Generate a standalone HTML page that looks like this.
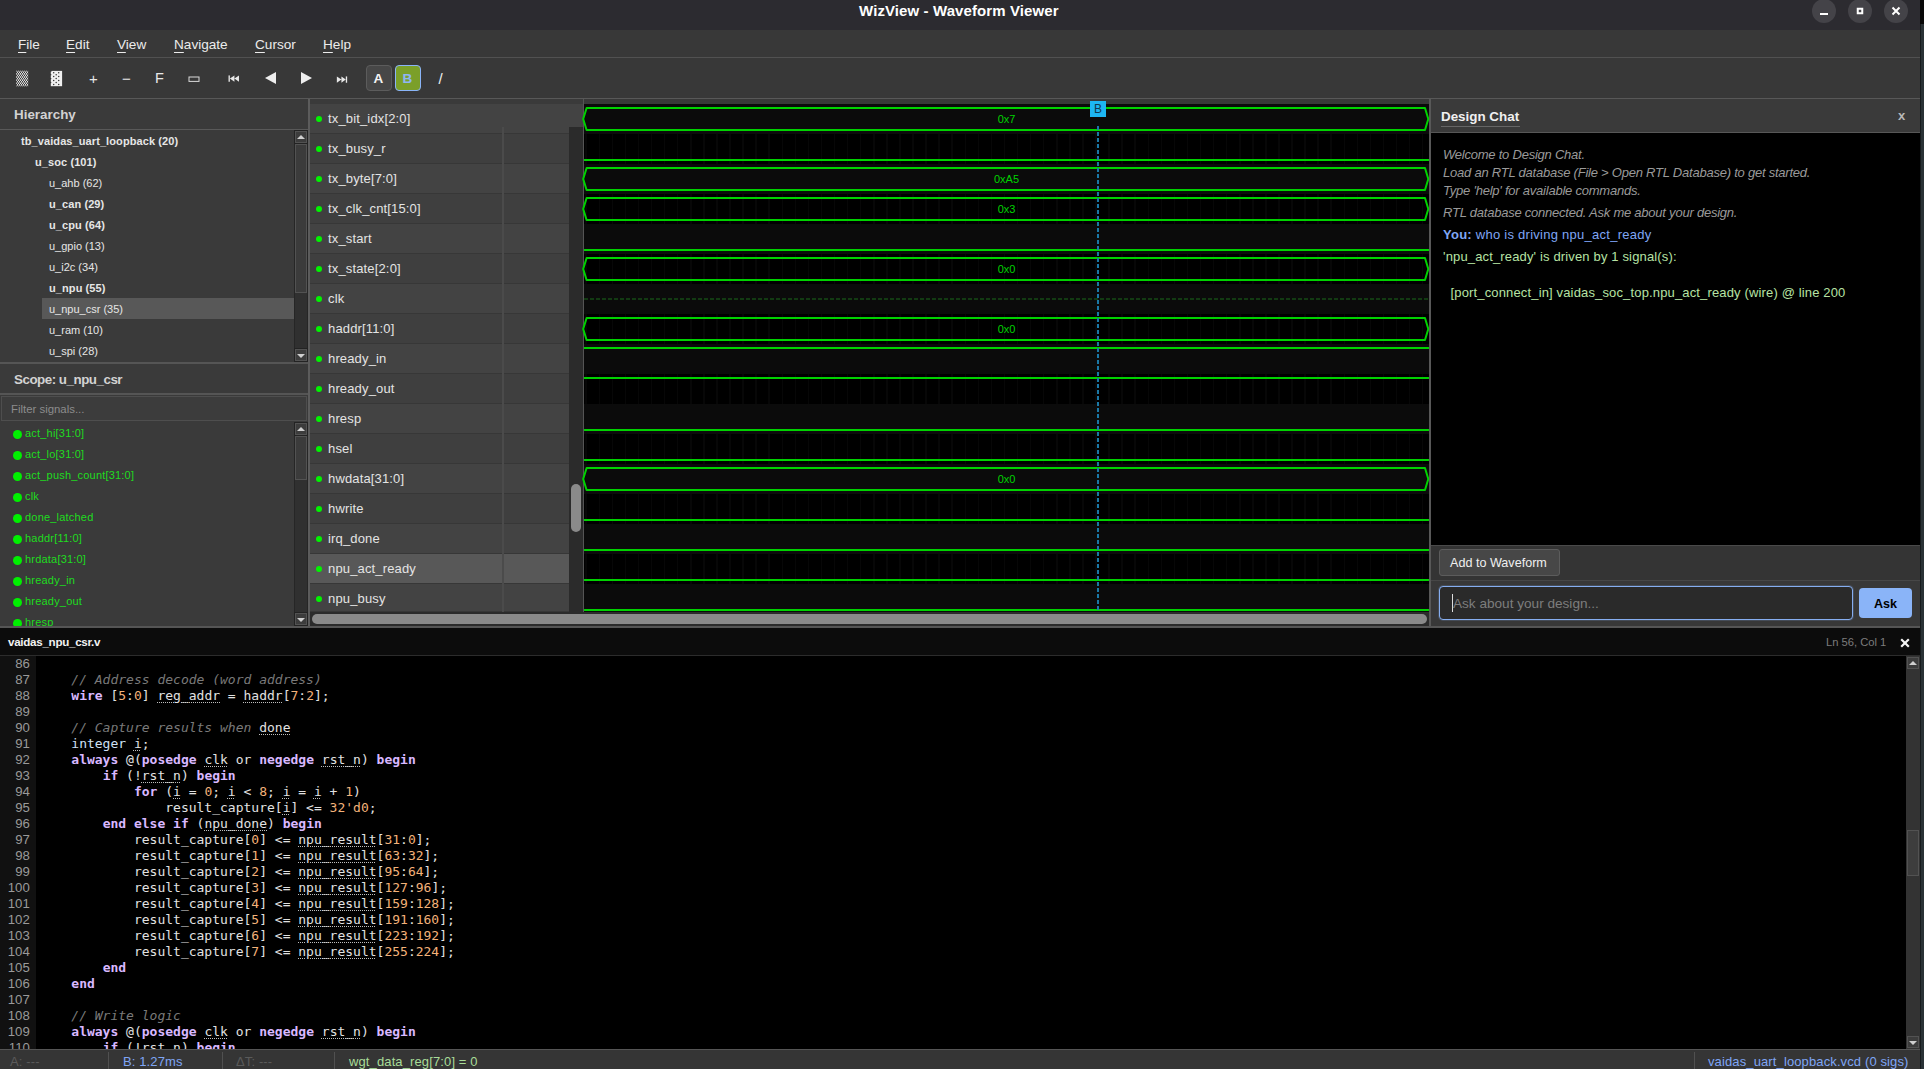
<!DOCTYPE html><html lang="en"><head><meta charset="utf-8"><title>WizView - Waveform Viewer</title><style>

*{box-sizing:border-box;margin:0;padding:0}
html,body{width:1924px;height:1069px;overflow:hidden;background:#2a3236}
body{position:relative;font-family:"Liberation Sans", "DejaVu Sans", sans-serif;font-size:13px;color:#e0e0e0}
.abs{position:absolute}
.t{position:absolute;white-space:pre;line-height:1}
#win{position:absolute;left:0;top:0;width:1920px;height:1069px;background:#383838;overflow:hidden}
#title{position:absolute;left:0;top:0;width:1920px;height:30px;background:#2c2b30}
.wb{position:absolute;top:-1px;width:24px;height:24px;border-radius:12px;background:#444348}
#menu{position:absolute;left:0;top:30px;width:1920px;height:28px;background:#383838;border-bottom:1px solid #515151}
#menu span.m{position:absolute;top:8px;font-size:13.6px;color:#ececec;line-height:14px;white-space:pre}
#menu span.m u{text-decoration:underline;text-underline-offset:2.5px}
#tool{position:absolute;left:0;top:58px;width:1920px;height:41px;background:#383838;border-bottom:1px solid #585858}
.ic{position:absolute;color:#e8e8e8;line-height:1;white-space:pre}
.sbtn{position:absolute;width:14px;height:14px;background:#3c3c3c;border:1px solid #232323;box-shadow:inset 0 0 0 1px #525252}
.sbtn i{position:absolute;left:2px;top:4px;width:0;height:0;border-left:4px solid transparent;border-right:4px solid transparent}
.sbtn.up i{border-bottom:4px solid #cfcfcf}
.sbtn.dn i{border-top:4px solid #cfcfcf;top:5px}
.strack{position:absolute;width:14px;background:#303030;border-left:1px solid #262626;border-right:1px solid #262626}
.sthumb{position:absolute;width:12px;left:1px;background:#3b3b3b;border:1px solid #525252}
.trow{position:absolute;left:0;width:294px;height:21px}
.trow span{position:absolute;top:5px;font-size:11px;line-height:13px;color:#e6e6e6;white-space:pre}
.srow{position:absolute;left:0;width:294px;height:21px}
.srow b{position:absolute;left:13px;top:6.5px;width:9px;height:9px;border-radius:5px;background:#00f000}
.srow span{position:absolute;left:25px;top:4px;letter-spacing:.2px;font-size:11px;line-height:13px;color:#1fdc1f;white-space:pre}
.nrow{position:absolute;left:310px;height:30px;border-bottom:1px solid #373737}
.nrow b{position:absolute;left:6px;top:12px;width:6px;height:6px;border-radius:3px;background:#00f400}
.nrow span{position:absolute;left:18px;top:7px;letter-spacing:.15px;font-size:13px;line-height:16px;color:#e4e4e4;white-space:pre}
.wrow{position:absolute;left:584px;width:845px;height:30px}
.wval{position:absolute;left:0;width:845px;text-align:center;font-size:11px;line-height:12px;top:9px;color:#00d200}
#code{position:absolute;left:0;top:656px;width:1906px;height:393px;background:#000;overflow:hidden}
#gut{position:absolute;left:0;top:0;width:36px;height:393px;background:#111}
.ln{position:absolute;left:0;width:30px;text-align:right;font-size:13.2px;letter-spacing:.1px;line-height:16px;color:#9a9a9a;font-family:"Liberation Sans", "DejaVu Sans", sans-serif}
.cl{position:absolute;left:40px;font-family:"DejaVu Sans Mono", "Liberation Mono", monospace;font-size:13px;line-height:16px;color:#e2e2e2;white-space:pre}
.k{color:#d9b8ff;font-weight:bold}
.n{color:#f3b27a}
.c{color:#7a7a7a;font-style:italic}
.ty{color:#cfe0f5}
.id{text-decoration:underline dotted #bdbdbd 1px;text-underline-offset:2px}
#status{position:absolute;left:0;top:1049px;width:1920px;height:20px;background:#353535;border-top:1px solid #555}
#status span{position:absolute;top:5px;letter-spacing:.12px;font-size:13px;line-height:13px;white-space:pre}
#status i{position:absolute;top:2px;width:1px;height:18px;background:#505050}

</style></head><body>
<div class="abs" style="left:1920px;top:0;width:1px;height:1069px;background:#171b1e"></div>
<div class="abs" style="left:1920px;top:0;width:4px;height:24px;background:#080808"></div>
<div id="win">
<div id="title">
<span class="t" id="ttl" style="left:859px;top:3px;font-size:15px;font-weight:bold;color:#fff;line-height:16px;letter-spacing:0.1px">WizView - Waveform Viewer</span>
<div class="wb" style="left:1812px">
<svg width="24" height="24" viewBox="0 0 24 24"><rect x="8" y="14" width="8" height="2" fill="#fff"/></svg>
</div>
<div class="wb" style="left:1848px">
<svg width="24" height="24" viewBox="0 0 24 24"><rect x="9.75" y="9.75" width="4.5" height="4.5" fill="none" stroke="#fff" stroke-width="2"/></svg>
</div>
<div class="wb" style="left:1884px">
<svg width="24" height="24" viewBox="0 0 24 24"><path d="M8.5 8.5 L15.5 15.5 M15.5 8.5 L8.5 15.5" stroke="#fff" stroke-width="2" fill="none"/></svg>
</div>
</div>
<div id="menu">
<span class="m" style="left:18px"><u>F</u>ile</span>
<span class="m" style="left:66px"><u>E</u>dit</span>
<span class="m" style="left:117px"><u>V</u>iew</span>
<span class="m" style="left:174px"><u>N</u>avigate</span>
<span class="m" style="left:255px"><u>C</u>ursor</span>
<span class="m" style="left:323px"><u>H</u>elp</span>
</div>
<div id="tool">
<svg class="abs" style="left:16px;top:12px" width="13" height="17" viewBox="0 0 13 17"><defs><pattern id="p1" width="2" height="3.12" patternUnits="userSpaceOnUse"><rect x="0" y="0" width="1.1" height="1.56" fill="#dcdcdc"/><rect x="1" y="1.56" width="1.1" height="1.56" fill="#dcdcdc"/></pattern></defs><rect x="0.2" y="0.7" width="12" height="15.6" fill="url(#p1)"/></svg>
<svg class="abs" style="left:50px;top:12px" width="13" height="17" viewBox="0 0 13 17"><rect x="0.8" y="0.9" width="11.3" height="15.3" fill="#f0f0f0"/><g fill="#383838"><circle cx="3.7" cy="2.7" r="0.75"/><circle cx="8.7" cy="2.7" r="0.75"/><circle cx="6.2" cy="4.7" r="0.75"/><rect x="0" y="4.1" width="1.3" height="1.2"/><circle cx="3.7" cy="6.6" r="0.75"/><circle cx="8.7" cy="6.6" r="0.75"/><circle cx="6.2" cy="8.6" r="0.75"/><rect x="0" y="8.0" width="1.3" height="1.2"/><circle cx="3.7" cy="10.5" r="0.75"/><circle cx="8.7" cy="10.5" r="0.75"/><circle cx="6.2" cy="12.5" r="0.75"/><rect x="0" y="11.9" width="1.3" height="1.2"/><circle cx="3.7" cy="14.4" r="0.75"/><circle cx="8.7" cy="14.4" r="0.75"/><rect x="0" y="0" width="1.6" height="1.6"/></g></svg>
<span class="ic" style="left:89px;top:13px;font-size:15px">+</span>
<span class="ic" style="left:122px;top:13px;font-size:15px">−</span>
<span class="ic" style="left:155px;top:13px;font-size:14.5px">F</span>
<svg class="abs" style="left:188px;top:18px" width="12" height="7"><rect x="1" y="1" width="10" height="4.4" fill="none" stroke="#dadada" stroke-width="1"/></svg>
<svg class="abs" style="left:228px;top:17px" width="12" height="7.6" viewBox="0 0 13 9"><rect x="0" y="0.5" width="1.6" height="7.5" fill="#e8e8e8"/><path d="M7 0.5 L7 8 L1.6 4.25 Z M12.4 0.5 L12.4 8 L7 4.25 Z" fill="#e8e8e8"/></svg>
<svg class="abs" style="left:264px;top:13px" width="13" height="14" viewBox="0 0 13 14"><path d="M12 1 L12 13 L1 7 Z" fill="#eee"/></svg>
<svg class="abs" style="left:300px;top:13px" width="13" height="14" viewBox="0 0 13 14"><path d="M1 1 L1 13 L12 7 Z" fill="#eee"/></svg>
<svg class="abs" style="left:336.3px;top:17.6px" width="12" height="7.6" viewBox="0 0 13 9"><rect x="11" y="0.5" width="1.6" height="7.5" fill="#e8e8e8"/><path d="M0.4 0.5 L0.4 8 L5.8 4.25 Z M5.8 0.5 L5.8 8 L11 4.25 Z" fill="#e8e8e8"/></svg>
<div class="abs" style="left:366px;top:7px;width:26px;height:26px;background:#474747;border:1px solid #5c5c5c;border-radius:4px"></div>
<span class="ic" style="left:373.5px;top:14px;font-size:13.5px;font-weight:bold;color:#f4f4f4">A</span>
<div class="abs" style="left:395px;top:7px;width:26px;height:26px;background:#7b9f29;border:1px solid #8ab4f8;border-radius:4px"></div>
<span class="ic" style="left:402.5px;top:14px;font-size:13.5px;font-weight:bold;color:#8fb6f2">B</span>
<span class="ic" style="left:438.5px;top:13px;font-size:15px;color:#f0f0f0">/</span>
</div>
<div class="abs" style="left:0;top:99px;width:308px;height:527px;background:#3a3a3a"></div>
<span class="t" id="hh" style="left:14px;top:108px;font-size:13.4px;font-weight:bold;color:#d2d2d2;line-height:14px">Hierarchy</span>
<div class="abs" style="left:0;top:129px;width:308px;height:1px;background:#595959"></div>
<div class="trow" style="top:130px"><span style="left:21px;font-weight:bold;letter-spacing:.09px;">tb_vaidas_uart_loopback (20)</span></div>
<div class="trow" style="top:151px"><span style="left:35px;font-weight:bold;letter-spacing:.09px;">u_soc (101)</span></div>
<div class="trow" style="top:172px"><span style="left:49px;">u_ahb (62)</span></div>
<div class="trow" style="top:193px"><span style="left:49px;font-weight:bold;letter-spacing:.09px;">u_can (29)</span></div>
<div class="trow" style="top:214px"><span style="left:49px;font-weight:bold;letter-spacing:.09px;">u_cpu (64)</span></div>
<div class="trow" style="top:235px"><span style="left:49px;">u_gpio (13)</span></div>
<div class="trow" style="top:256px"><span style="left:49px;">u_i2c (34)</span></div>
<div class="trow" style="top:277px"><span style="left:49px;font-weight:bold;letter-spacing:.09px;">u_npu (55)</span></div>
<div class="abs" style="left:42px;top:298px;width:252px;height:21px;background:#585858"></div>
<div class="trow" style="top:298px"><span style="left:49px;">u_npu_csr (35)</span></div>
<div class="trow" style="top:319px"><span style="left:49px;">u_ram (10)</span></div>
<div class="trow" style="top:340px"><span style="left:49px;">u_spi (28)</span></div>
<div class="strack" style="left:294px;top:130px;height:232px"></div>
<div class="sbtn up" style="left:294px;top:130px"><i></i></div>
<div class="sbtn dn" style="left:294px;top:348px"><i></i></div>
<div class="sthumb" style="left:295px;top:144px;height:149px"></div>
<div class="abs" style="left:0;top:362px;width:308px;height:2px;background:#555"></div>
<span class="t" id="sc" style="left:14px;top:373px;letter-spacing:-0.5px;font-size:13.4px;font-weight:bold;color:#d2d2d2;line-height:14px">Scope: u_npu_csr</span>
<div class="abs" style="left:0;top:393px;width:308px;height:2px;background:#555"></div>
<div class="abs" style="left:1px;top:396px;width:306px;height:25px;background:#3c3c3c;border:1px solid #4e4e4e"></div>
<span class="t" style="left:11px;top:403px;font-size:11.4px;color:#8c8c8c;line-height:12px">Filter signals...</span>
<div class="abs" style="left:0;top:422px;width:294px;height:204px;overflow:hidden">
<div class="srow" style="top:1px"><b></b><span>act_hi[31:0]</span></div>
<div class="srow" style="top:22px"><b></b><span>act_lo[31:0]</span></div>
<div class="srow" style="top:43px"><b></b><span>act_push_count[31:0]</span></div>
<div class="srow" style="top:64px"><b></b><span>clk</span></div>
<div class="srow" style="top:85px"><b></b><span>done_latched</span></div>
<div class="srow" style="top:106px"><b></b><span>haddr[11:0]</span></div>
<div class="srow" style="top:127px"><b></b><span>hrdata[31:0]</span></div>
<div class="srow" style="top:148px"><b></b><span>hready_in</span></div>
<div class="srow" style="top:169px"><b></b><span>hready_out</span></div>
<div class="srow" style="top:190px"><b></b><span>hresp</span></div>
</div>
<div class="strack" style="left:294px;top:422px;height:204px"></div>
<div class="sbtn up" style="left:294px;top:422px"><i></i></div>
<div class="sbtn dn" style="left:294px;top:612px"><i></i></div>
<div class="sthumb" style="left:295px;top:436px;height:44px"></div>
<div class="abs" style="left:308px;top:99px;width:2px;height:527px;background:#5c5c5c"></div>
<div class="abs" style="left:310px;top:99px;width:273px;height:527px;background:#3a3a3a"></div>
<div class="nrow" style="top:104px;width:273px;height:30px;background:#434343"><b></b><span>tx_bit_idx[2:0]</span></div>
<div class="nrow" style="top:134px;width:259px;height:30px;background:#3f3f3f"><b></b><span>tx_busy_r</span></div>
<div class="nrow" style="top:164px;width:259px;height:30px;background:#434343"><b></b><span>tx_byte[7:0]</span></div>
<div class="nrow" style="top:194px;width:259px;height:30px;background:#3f3f3f"><b></b><span>tx_clk_cnt[15:0]</span></div>
<div class="nrow" style="top:224px;width:259px;height:30px;background:#434343"><b></b><span>tx_start</span></div>
<div class="nrow" style="top:254px;width:259px;height:30px;background:#3f3f3f"><b></b><span>tx_state[2:0]</span></div>
<div class="nrow" style="top:284px;width:259px;height:30px;background:#434343"><b></b><span>clk</span></div>
<div class="nrow" style="top:314px;width:259px;height:30px;background:#3f3f3f"><b></b><span>haddr[11:0]</span></div>
<div class="nrow" style="top:344px;width:259px;height:30px;background:#434343"><b></b><span>hready_in</span></div>
<div class="nrow" style="top:374px;width:259px;height:30px;background:#3f3f3f"><b></b><span>hready_out</span></div>
<div class="nrow" style="top:404px;width:259px;height:30px;background:#434343"><b></b><span>hresp</span></div>
<div class="nrow" style="top:434px;width:259px;height:30px;background:#3f3f3f"><b></b><span>hsel</span></div>
<div class="nrow" style="top:464px;width:259px;height:30px;background:#434343"><b></b><span>hwdata[31:0]</span></div>
<div class="nrow" style="top:494px;width:259px;height:30px;background:#3f3f3f"><b></b><span>hwrite</span></div>
<div class="nrow" style="top:524px;width:259px;height:30px;background:#434343"><b></b><span>irq_done</span></div>
<div class="nrow" style="top:554px;width:259px;height:30px;background:#585858"><b></b><span>npu_act_ready</span></div>
<div class="nrow" style="top:584px;width:259px;height:28px;background:#434343"><b></b><span>npu_busy</span></div>
<div class="abs" style="left:502px;top:127px;width:2px;height:485px;background:#4b4b4b"></div>
<div class="abs" style="left:569px;top:127px;width:14px;height:485px;background:#2b2b2b"></div>
<div class="abs" style="left:571px;top:484px;width:10px;height:48px;border-radius:5px;background:#8a8a8a"></div>
<div class="abs" style="left:583px;top:99px;width:1px;height:527px;background:#555"></div>
<div class="abs" style="left:584px;top:99px;width:845px;height:5px;background:#383838"></div>
<div class="abs" style="left:584px;top:104px;width:845px;height:510px;background:#000;background-image:repeating-linear-gradient(90deg,transparent 0,transparent 1.5px,#070707 1px,#070707 3px,transparent 3px,transparent 13.07px)"></div>
<div class="wrow" style="top:104px;background:#0b0b0b;">
<svg class="abs" style="left:-2px;top:0" width="848" height="30"><path d="M1.2 15 L4.6 4 L843 4 L846.3 15 L843 26 L4.6 26 Z" fill="none" stroke="#00d200" stroke-width="2" stroke-linejoin="round"/></svg>
<div class="wval">0x7</div>
</div>
<div class="wrow" style="top:134px;">
<div class="abs" style="left:0;top:25px;width:845px;height:2px;background:#00d200"></div>
</div>
<div class="wrow" style="top:164px;background:#0b0b0b;">
<svg class="abs" style="left:-2px;top:0" width="848" height="30"><path d="M1.2 15 L4.6 4 L843 4 L846.3 15 L843 26 L4.6 26 Z" fill="none" stroke="#00d200" stroke-width="2" stroke-linejoin="round"/></svg>
<div class="wval">0xA5</div>
</div>
<div class="wrow" style="top:194px;">
<svg class="abs" style="left:-2px;top:0" width="848" height="30"><path d="M1.2 15 L4.6 4 L843 4 L846.3 15 L843 26 L4.6 26 Z" fill="none" stroke="#00d200" stroke-width="2" stroke-linejoin="round"/></svg>
<div class="wval">0x3</div>
</div>
<div class="wrow" style="top:224px;background:#0b0b0b;">
<div class="abs" style="left:0;top:25px;width:845px;height:2px;background:#00d200"></div>
</div>
<div class="wrow" style="top:254px;">
<svg class="abs" style="left:-2px;top:0" width="848" height="30"><path d="M1.2 15 L4.6 4 L843 4 L846.3 15 L843 26 L4.6 26 Z" fill="none" stroke="#00d200" stroke-width="2" stroke-linejoin="round"/></svg>
<div class="wval">0x0</div>
</div>
<div class="wrow" style="top:284px;background:#0b0b0b;">
<div class="abs" style="left:0;top:14px;width:845px;height:2px;background:repeating-linear-gradient(90deg,#123a12 0,#123a12 4px,transparent 4px,transparent 6px)"></div>
</div>
<div class="wrow" style="top:314px;">
<svg class="abs" style="left:-2px;top:0" width="848" height="30"><path d="M1.2 15 L4.6 4 L843 4 L846.3 15 L843 26 L4.6 26 Z" fill="none" stroke="#00d200" stroke-width="2" stroke-linejoin="round"/></svg>
<div class="wval">0x0</div>
</div>
<div class="wrow" style="top:344px;background:#0b0b0b;">
<div class="abs" style="left:0;top:3px;width:845px;height:2px;background:#00d200"></div>
</div>
<div class="wrow" style="top:374px;">
<div class="abs" style="left:0;top:3px;width:845px;height:2px;background:#00d200"></div>
</div>
<div class="wrow" style="top:404px;background:#0b0b0b;">
<div class="abs" style="left:0;top:25px;width:845px;height:2px;background:#00d200"></div>
</div>
<div class="wrow" style="top:434px;">
<div class="abs" style="left:0;top:25px;width:845px;height:2px;background:#00d200"></div>
</div>
<div class="wrow" style="top:464px;background:#0b0b0b;">
<svg class="abs" style="left:-2px;top:0" width="848" height="30"><path d="M1.2 15 L4.6 4 L843 4 L846.3 15 L843 26 L4.6 26 Z" fill="none" stroke="#00d200" stroke-width="2" stroke-linejoin="round"/></svg>
<div class="wval">0x0</div>
</div>
<div class="wrow" style="top:494px;">
<div class="abs" style="left:0;top:25px;width:845px;height:2px;background:#00d200"></div>
</div>
<div class="wrow" style="top:524px;background:#0b0b0b;">
<div class="abs" style="left:0;top:25px;width:845px;height:2px;background:#00d200"></div>
</div>
<div class="wrow" style="top:554px;">
<div class="abs" style="left:0;top:25px;width:845px;height:2px;background:#00d200"></div>
</div>
<div class="wrow" style="top:584px;background:#0b0b0b;">
<div class="abs" style="left:0;top:25px;width:845px;height:2px;background:#00d200"></div>
</div>
<div class="abs" style="left:310px;top:612px;width:1119px;height:14px;background:#2b2b2b"></div>
<div class="abs" style="left:312px;top:614px;width:1115px;height:10px;border-radius:5px;background:#8a8a8a"></div>
<div class="abs" style="left:1097px;top:126px;width:2px;height:486px;background:repeating-linear-gradient(180deg,#1a78a6 0,#1a78a6 4px,transparent 4px,transparent 6px)"></div>
<div class="abs" style="left:1090px;top:101px;width:16px;height:16px;background:#1db6f2"></div>
<span class="t" style="left:1094px;top:103px;font-size:12px;color:#12384f;line-height:12px">B</span>
<div class="abs" style="left:1429px;top:99px;width:2px;height:527px;background:#585858"></div>
<div class="abs" style="left:1431px;top:99px;width:489px;height:34px;background:#3a3a3a;border-bottom:1px solid #575757"></div>
<span class="t" id="dc" style="left:1441px;top:110px;font-size:13.4px;font-weight:bold;color:#f0f0f0;line-height:14px">Design Chat</span>
<div class="abs" style="left:1441px;top:126px;width:79px;height:1px;background:#666"></div>
<span class="t" style="left:1898px;top:109px;font-size:13px;font-weight:bold;color:#b8b8b8;line-height:14px">x</span>
<div class="abs" style="left:1431px;top:133px;width:489px;height:412px;background:#000"></div>
<span class="t ch" style="left:1443px;top:148px;font-size:13px;line-height:14px;font-style:italic;color:#9a9a9a;letter-spacing:-.23px">Welcome to Design Chat.</span>
<span class="t ch" style="left:1443px;top:166px;font-size:13px;line-height:14px;font-style:italic;color:#9a9a9a;letter-spacing:-.23px">Load an RTL database (File &gt; Open RTL Database) to get started.</span>
<span class="t ch" style="left:1443px;top:184px;font-size:13px;line-height:14px;font-style:italic;color:#9a9a9a;letter-spacing:-.23px">Type 'help' for available commands.</span>
<span class="t ch" style="left:1443px;top:206px;font-size:13px;line-height:14px;font-style:italic;color:#9a9a9a;letter-spacing:-.23px">RTL database connected. Ask me about your design.</span>
<span class="t ch" style="left:1443px;top:228px;font-size:13px;line-height:14px;color:#7fa6f5;letter-spacing:.26px"><b>You:</b> who is driving npu_act_ready</span>
<span class="t ch" style="left:1443px;top:250px;font-size:13px;line-height:14px;color:#b7e3a4;letter-spacing:.15px">'npu_act_ready' is driven by 1 signal(s):</span>
<span class="t ch" style="left:1443px;top:286px;font-size:13px;line-height:14px;color:#b7e3a4;letter-spacing:.15px">  [port_connect_in] vaidas_soc_top.npu_act_ready (wire) @ line 200</span>
<div class="abs" style="left:1431px;top:545px;width:489px;height:36px;background:#343434;border-top:1px solid #4a4a4a;border-bottom:1px solid #474747"></div>
<div class="abs" style="left:1439px;top:549px;width:121px;height:27px;background:#474747;border:1px solid #5c5c5c;border-radius:3px"></div>
<span class="t" id="aw" style="left:1450px;top:555.5px;font-size:12.6px;color:#f0f0f0;line-height:14px">Add to Waveform</span>
<div class="abs" style="left:1431px;top:581px;width:489px;height:45px;background:#383838"></div>
<div class="abs" style="left:1439px;top:586px;width:414px;height:34px;background:#2a2a2a;border:1px solid #86aef0;border-radius:4px;box-shadow:0 0 0 1px rgba(134,174,240,.18)"></div>
<div class="abs" style="left:1452px;top:594px;width:1px;height:18px;background:#ddd"></div>
<span class="t" id="ph" style="left:1453px;top:597px;font-size:13.6px;color:#7d7d7d;line-height:14px">Ask about your design...</span>
<div class="abs" style="left:1859px;top:588px;width:53px;height:30px;background:#8ab4f8;border-radius:4px"></div>
<span class="t" style="left:1874px;top:597px;font-size:12.6px;font-weight:bold;color:#000;line-height:14px">Ask</span>
<div class="abs" style="left:0;top:626px;width:1920px;height:2px;background:#555"></div>
<div class="abs" style="left:0;top:628px;width:1920px;height:28px;background:#0c0c0c;border-bottom:1px solid #2c2c2c"></div>
<span class="t" id="tab" style="left:8px;top:636px;letter-spacing:-.28px;font-size:11.6px;font-weight:bold;color:#f2f2f2;line-height:12px">vaidas_npu_csr.v</span>
<span class="t" id="lc" style="left:1826px;top:636px;font-size:11.2px;color:#7c7c7c;line-height:12px">Ln 56, Col 1</span>
<svg class="abs" style="left:1900px;top:638px" width="10" height="10" viewBox="0 0 10 10"><path d="M1.2 1.2 L8.8 8.8 M8.8 1.2 L1.2 8.8" stroke="#f4f4f4" stroke-width="2.2"/></svg>
<div id="code"><div id="gut"></div>
<div class="ln" style="top:0px">86</div>
<div class="ln" style="top:16px">87</div>
<div class="cl" style="top:16px">    <span class="c">// Address decode (word address)</span></div>
<div class="ln" style="top:32px">88</div>
<div class="cl" style="top:32px">    <span class="k">wire</span> [<span class="n">5</span>:<span class="n">0</span>] <span class="id">reg_addr</span> = <span class="id">haddr</span>[<span class="n">7</span>:<span class="n">2</span>];</div>
<div class="ln" style="top:48px">89</div>
<div class="ln" style="top:64px">90</div>
<div class="cl" style="top:64px">    <span class="c">// Capture results when </span><span class="id">done</span></div>
<div class="ln" style="top:80px">91</div>
<div class="cl" style="top:80px">    <span class="ty">integer</span> <span class="id">i</span>;</div>
<div class="ln" style="top:96px">92</div>
<div class="cl" style="top:96px">    <span class="k">always</span> @(<span class="k">posedge</span> <span class="id">clk</span> or <span class="k">negedge</span> <span class="id">rst_n</span>) <span class="k">begin</span></div>
<div class="ln" style="top:112px">93</div>
<div class="cl" style="top:112px">        <span class="k">if</span> (!<span class="id">rst_n</span>) <span class="k">begin</span></div>
<div class="ln" style="top:128px">94</div>
<div class="cl" style="top:128px">            <span class="k">for</span> (<span class="id">i</span> = <span class="n">0</span>; <span class="id">i</span> &lt; <span class="n">8</span>; <span class="id">i</span> = <span class="id">i</span> + <span class="n">1</span>)</div>
<div class="ln" style="top:144px">95</div>
<div class="cl" style="top:144px">                result_capture[<span class="id">i</span>] &lt;= <span class="n">32&#x27;d0</span>;</div>
<div class="ln" style="top:160px">96</div>
<div class="cl" style="top:160px">        <span class="k">end</span> <span class="k">else</span> <span class="k">if</span> (<span class="id">npu_done</span>) <span class="k">begin</span></div>
<div class="ln" style="top:176px">97</div>
<div class="cl" style="top:176px">            result_capture[<span class="n">0</span>] &lt;= <span class="id">npu_result</span>[<span class="n">31</span>:<span class="n">0</span>];</div>
<div class="ln" style="top:192px">98</div>
<div class="cl" style="top:192px">            result_capture[<span class="n">1</span>] &lt;= <span class="id">npu_result</span>[<span class="n">63</span>:<span class="n">32</span>];</div>
<div class="ln" style="top:208px">99</div>
<div class="cl" style="top:208px">            result_capture[<span class="n">2</span>] &lt;= <span class="id">npu_result</span>[<span class="n">95</span>:<span class="n">64</span>];</div>
<div class="ln" style="top:224px">100</div>
<div class="cl" style="top:224px">            result_capture[<span class="n">3</span>] &lt;= <span class="id">npu_result</span>[<span class="n">127</span>:<span class="n">96</span>];</div>
<div class="ln" style="top:240px">101</div>
<div class="cl" style="top:240px">            result_capture[<span class="n">4</span>] &lt;= <span class="id">npu_result</span>[<span class="n">159</span>:<span class="n">128</span>];</div>
<div class="ln" style="top:256px">102</div>
<div class="cl" style="top:256px">            result_capture[<span class="n">5</span>] &lt;= <span class="id">npu_result</span>[<span class="n">191</span>:<span class="n">160</span>];</div>
<div class="ln" style="top:272px">103</div>
<div class="cl" style="top:272px">            result_capture[<span class="n">6</span>] &lt;= <span class="id">npu_result</span>[<span class="n">223</span>:<span class="n">192</span>];</div>
<div class="ln" style="top:288px">104</div>
<div class="cl" style="top:288px">            result_capture[<span class="n">7</span>] &lt;= <span class="id">npu_result</span>[<span class="n">255</span>:<span class="n">224</span>];</div>
<div class="ln" style="top:304px">105</div>
<div class="cl" style="top:304px">        <span class="k">end</span></div>
<div class="ln" style="top:320px">106</div>
<div class="cl" style="top:320px">    <span class="k">end</span></div>
<div class="ln" style="top:336px">107</div>
<div class="ln" style="top:352px">108</div>
<div class="cl" style="top:352px">    <span class="c">// Write logic</span></div>
<div class="ln" style="top:368px">109</div>
<div class="cl" style="top:368px">    <span class="k">always</span> @(<span class="k">posedge</span> <span class="id">clk</span> or <span class="k">negedge</span> <span class="id">rst_n</span>) <span class="k">begin</span></div>
<div class="ln" style="top:384px">110</div>
<div class="cl" style="top:384px">        <span class="k">if</span> (!<span class="id">rst_n</span>) <span class="k">begin</span></div>
</div>
<div class="abs" style="left:1906px;top:656px;width:14px;height:393px;background:#333"></div>
<div class="sbtn up" style="left:1906px;top:656px;border-color:#333"><i></i></div>
<div class="sbtn dn" style="left:1906px;top:1035px;border-color:#333"><i></i></div>
<div class="sthumb" style="left:1907px;top:830px;height:46px;background:#3d3d3d"></div>
<div id="status">
<span style="left:10px;color:#5a5a5a">A: ---</span><i style="left:108px"></i>
<span style="left:123px;color:#7fa6f5">B: 1.27ms</span><i style="left:222px"></i>
<span style="left:236px;color:#5a5a5a">ΔT: ---</span><i style="left:334px"></i>
<span style="left:349px;color:#a8dc98">wgt_data_reg[7:0] = 0</span>
<i style="left:1694px"></i><span id="vcd" style="left:1708px;color:#7fa6f5">vaidas_uart_loopback.vcd (0 sigs)</span>
</div>
</div></body></html>
